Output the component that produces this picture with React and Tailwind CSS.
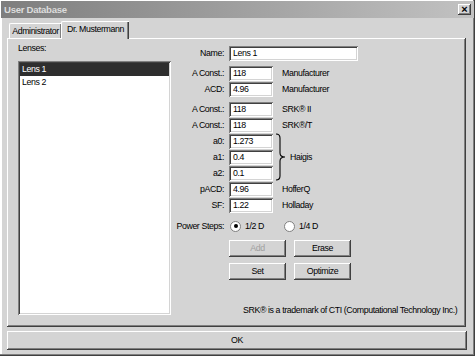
import React from 'react';

const raised =
  'shadow-[inset_-1px_-1px_0_#404040,inset_1px_1px_0_#ffffff,inset_-2px_-2px_0_#808080]';
const sunken =
  'shadow-[inset_1px_1px_0_#808080,inset_-1px_-1px_0_#ffffff,inset_2px_2px_0_#404040,inset_-2px_-2px_0_#d4d4d4]';

function Field({ label, value, wide, note }) {
  return (
    <div className="flex items-center h-[16px]">
      <div className="w-[51px] text-right whitespace-nowrap">{label}</div>
      <div
        className={`ml-[5px] h-[15px] bg-white ${sunken} pl-[4px] flex items-center ${
          wide ? 'w-[129px]' : 'w-[44px]'
        }`}
      >
        {value}
      </div>
      {note && <div className="ml-[9px] whitespace-nowrap">{note}</div>}
    </div>
  );
}

function Button({ children, disabled }) {
  return (
    <div
      className={`w-[57px] h-[17px] flex items-center justify-center ${raised} ${
        disabled ? 'text-[#a0a0a0]' : ''
      }`}
    >
      {children}
    </div>
  );
}

function Radio({ checked, label }) {
  return (
    <div className="flex items-center">
      <div className="w-[11px] h-[11px] rounded-full bg-white border border-[#808080] flex items-center justify-center">
        {checked && <div className="w-[4px] h-[4px] rounded-full bg-black" />}
      </div>
      <span className="ml-[4px]">{label}</span>
    </div>
  );
}

export default function App() {
  return (
    <div className="w-[475px] h-[356px] bg-[#d4d4d4] text-black text-[8.8px] tracking-[-0.4px] leading-none font-['Liberation_Sans',Arial,sans-serif] p-[1px] flex flex-col shadow-[inset_-1px_-1px_0_#404040,inset_-2px_-2px_0_#808080,inset_2px_2px_0_#ffffff]">
      {/* title bar */}
      <div className="h-[17px] bg-gradient-to-r from-[#7e7e7e] to-[#c2c2c2] flex items-center justify-between pl-[3px] pr-[3px]">
        <span className="font-bold text-[9.6px] tracking-[-0.3px] text-[#dcdcdc]">User Database</span>
        <div
          className={`w-[13px] h-[11px] bg-[#d4d4d4] ${raised} flex items-center justify-center text-[11px] font-bold tracking-normal`}
        >
          ×
        </div>
      </div>

      {/* tabs */}
      <div className="pl-[6px] pr-[8px] mt-[2px]">
        <div className="flex items-end h-[18px]">
          <div className="ml-[2px] h-[15px] w-[52px] whitespace-nowrap flex items-center justify-center border-t border-l border-white rounded-tl-[2px] shadow-[inset_-1px_0_0_#808080]">
            Administrator
          </div>
          <div className="h-[18px] w-[68px] whitespace-nowrap flex items-center justify-center border-t border-l border-white rounded-tl-[2px] shadow-[inset_-1px_0_0_#404040,inset_-2px_0_0_#808080] relative top-[1px] bg-[#d4d4d4] pb-[2px]">
            Dr. Mustermann
          </div>
        </div>

        {/* panel */}
        <div className="h-[289px] flex shadow-[inset_-1px_-1px_0_#404040,inset_1px_1px_0_#ffffff,inset_-2px_-2px_0_#808080]">
          <div className="pl-[11px] pt-[6px] flex flex-col">
            <div className="h-[12px]">Lenses:</div>
            <div className={`mt-[5px] w-[153px] h-[254px] bg-white ${sunken} p-[2px]`}>
              <div className="h-[13px] bg-[#2e2e2e] text-white flex items-center pl-[2px]">
                Lens 1
              </div>
              <div className="h-[13px] flex items-center pl-[2px]">Lens 2</div>
            </div>
          </div>

          <div className="ml-[2px] pt-[7px] flex flex-col">
            <Field label="Name:" value="Lens 1" wide />
            <div className="mt-[4px]">
              <Field label="A Const.:" value="118" note="Manufacturer" />
              <Field label="ACD:" value="4.96" note="Manufacturer" />
            </div>
            <div className="mt-[4px]">
              <Field label="A Const.:" value="118" note="SRK® II" />
              <Field label="A Const.:" value="118" note="SRK®/T" />
            </div>
            <div className="flex">
              <div>
                <Field label="a0:" value="1.273" />
                <Field label="a1:" value="0.4" />
                <Field label="a2:" value="0.1" />
              </div>
              <div className="flex items-center ml-[2px]">
                <svg width="12" height="48" viewBox="0 0 12 48" className="block">
                  <path
                    d="M1 1 Q5 1 5 5 L5 20 Q5 24 10 24 Q5 24 5 28 L5 43 Q5 47 1 47"
                    fill="none"
                    stroke="#000"
                    strokeWidth="1.1"
                  />
                </svg>
                <span className="ml-[3px]">Haigis</span>
              </div>
            </div>
            <Field label="pACD:" value="4.96" note="HofferQ" />
            <Field label="SF:" value="1.22" note="Holladay" />
            <div className="flex items-center h-[16px] mt-[5px]">
              <div className="w-[51px] text-right whitespace-nowrap">Power Steps:</div>
              <div className="ml-[6px] w-[54px]">
                <Radio checked label="1/2 D" />
              </div>
              <Radio label="1/4 D" />
            </div>
            <div className="ml-[56px] mt-[6px] flex gap-[8px]">
              <Button disabled>Add</Button>
              <Button>Erase</Button>
            </div>
            <div className="ml-[56px] mt-[6px] flex gap-[8px]">
              <Button>Set</Button>
              <Button>Optimize</Button>
            </div>
            <div className="ml-[70px] mt-[26px] whitespace-nowrap">
              SRK® is a trademark of CTI (Computational Technology Inc.)
            </div>
          </div>
        </div>

        {/* OK */}
        <div className={`mt-[4px] h-[19px] w-[460px] flex items-center justify-center ${raised}`}>
          OK
        </div>
      </div>
    </div>
  );
}
